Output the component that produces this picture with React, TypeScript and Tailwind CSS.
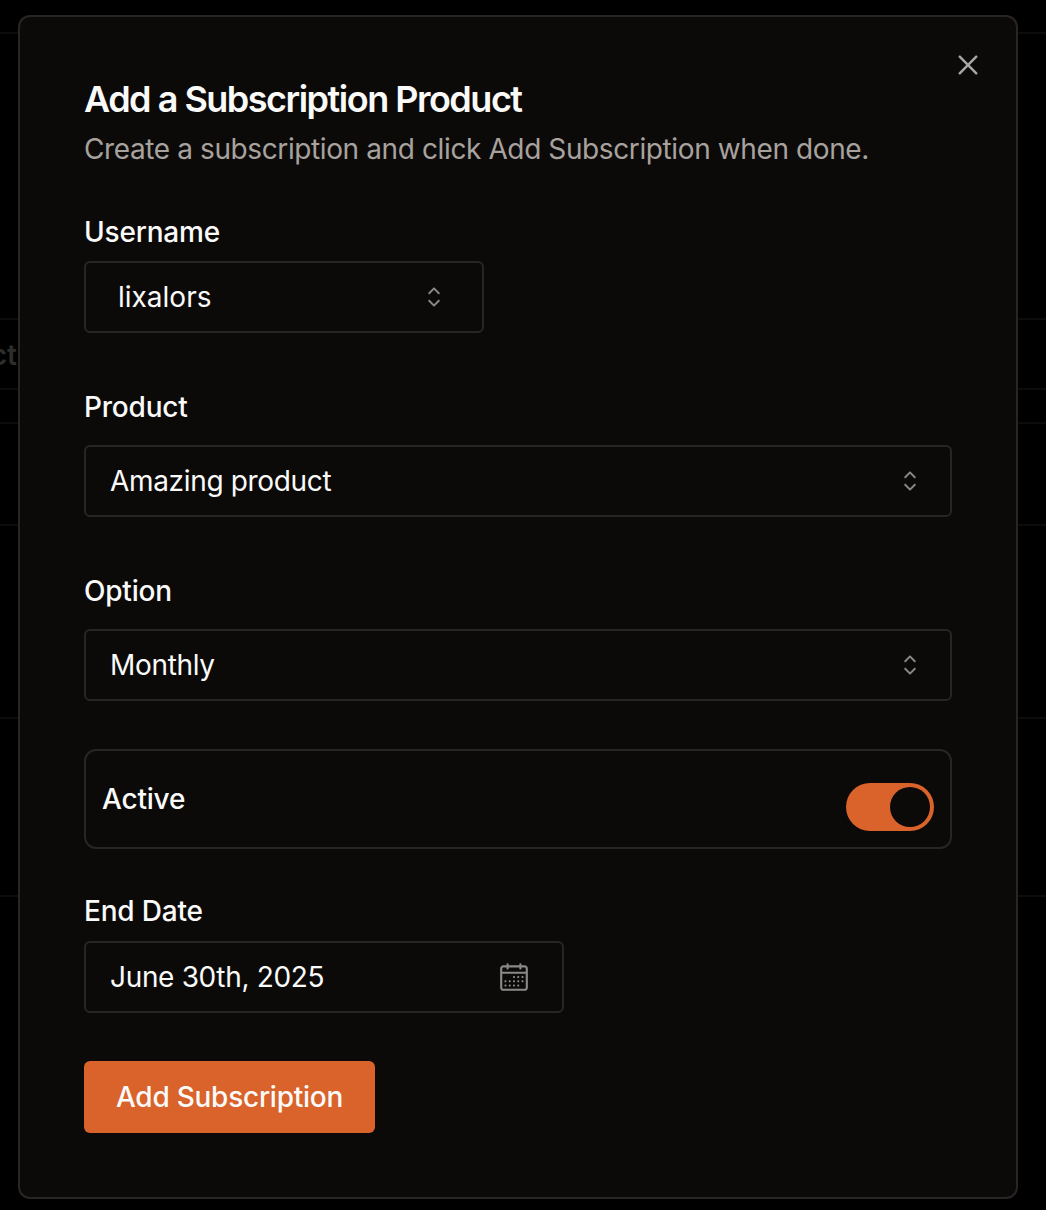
import React from 'react';
import { RxCalendar, RxCaretSort, RxCross2 } from 'react-icons/rx';

const rowHeights = ['h-[34px]', 'h-[286px]', 'h-[70px]', 'h-[34px]', 'h-[102px]', 'h-[193px]', 'h-[178px]'];

const Select: React.FC<{ value: string; wide?: boolean; inset?: boolean }> = ({ value, wide, inset }) => (
  <div
    className={`flex h-[72px] items-center justify-between rounded-[6px] border-2 border-[#292524] text-[28px] text-[#fafaf9] ${
      wide ? 'w-full' : 'w-[400px]'
    } ${inset ? 'pr-[32px] pl-[32px]' : 'pr-[24px] pl-[24px] tracking-[-0.33px]'}`}
  >
    <span>{value}</span>
    <RxCaretSort className="h-[32px] w-[32px] text-[#8a8988]" />
  </div>
);

const Label: React.FC<{ children: React.ReactNode; className?: string }> = ({ children, className }) => (
  <div className={`h-[34px] text-[28px] leading-[34px] font-medium tracking-[-0.2px] text-[#fafaf9] ${className ?? ''}`}>
    {children}
  </div>
);

const App: React.FC = () => {
  return (
    <div className="relative h-[1210px] w-[1046px] overflow-hidden bg-black font-['Inter',sans-serif]">
      {/* Table behind the dialog */}
      <div>
        {rowHeights.map((height, index) => (
          <div key={index} className={`${height} border-b-2 border-[#0c0c0b]`} />
        ))}
      </div>
      <div className="absolute top-[337px] right-[1029px] text-[28px] leading-[36px] font-semibold whitespace-nowrap text-[#2e2d2c]">
        Product
      </div>

      {/* Dialog */}
      <div className="absolute top-[15px] left-[18px] h-[1184px] w-[1000px] rounded-[12px] border-2 border-[#292524] bg-[#0c0a09] px-[64px] pt-[60px]">
        <button className="absolute top-[32px] right-[32px] text-[#a8a7a6]">
          <RxCross2 className="h-[32px] w-[32px]" />
        </button>

        <h2 className="h-[44px] text-[36px] leading-[44px] font-semibold tracking-[-1.5px] text-[#fafaf9]">
          Add a Subscription Product
        </h2>
        <p className="mt-[6px] h-[44px] text-[28px] leading-[44px] tracking-[-0.39px] text-[#a8a29e]">
          Create a subscription and click Add Subscription when done.
        </p>

        <Label className="mt-[44px]">Username</Label>
        <div className="mt-[12px]">
          <Select value="lixalors" inset />
        </div>

        <Label className="mt-[57px]">Product</Label>
        <div className="mt-[21px]">
          <Select value="Amazing product" wide />
        </div>

        <Label className="mt-[57px]">Option</Label>
        <div className="mt-[21px]">
          <Select value="Monthly" wide />
        </div>

        <div className="mt-[48px] flex h-[100px] items-center justify-between rounded-[12px] border-2 border-[#292524] pr-[16px] pl-[16px]">
          <div className="text-[28px] font-medium tracking-[-0.2px] text-[#fafaf9]">Active</div>
          <div className="mt-[16px] flex h-[48px] w-[88px] items-center justify-end rounded-full bg-[#d9632b] pr-[4px]">
            <div className="h-[40px] w-[40px] rounded-full bg-[#0c0a09]" />
          </div>
        </div>

        <Label className="mt-[45px]">End Date</Label>
        <div className="mt-[13px] flex h-[72px] w-[480px] items-center justify-between rounded-[6px] border-2 border-[#292524] pr-[32px] pl-[24px] text-[28px] tracking-[-0.33px] text-[#fafaf9]">
          <span>June 30th, 2025</span>
          <RxCalendar className="h-[32px] w-[32px] text-[#8a8988]" />
        </div>

        <button className="mt-[48px] flex h-[72px] w-[291px] items-center justify-center rounded-[6px] bg-[#d9632b] text-[28px] font-medium tracking-[-0.25px] text-[#fafaf9]">
          Add Subscription
        </button>
      </div>
    </div>
  );
};

export default App;
